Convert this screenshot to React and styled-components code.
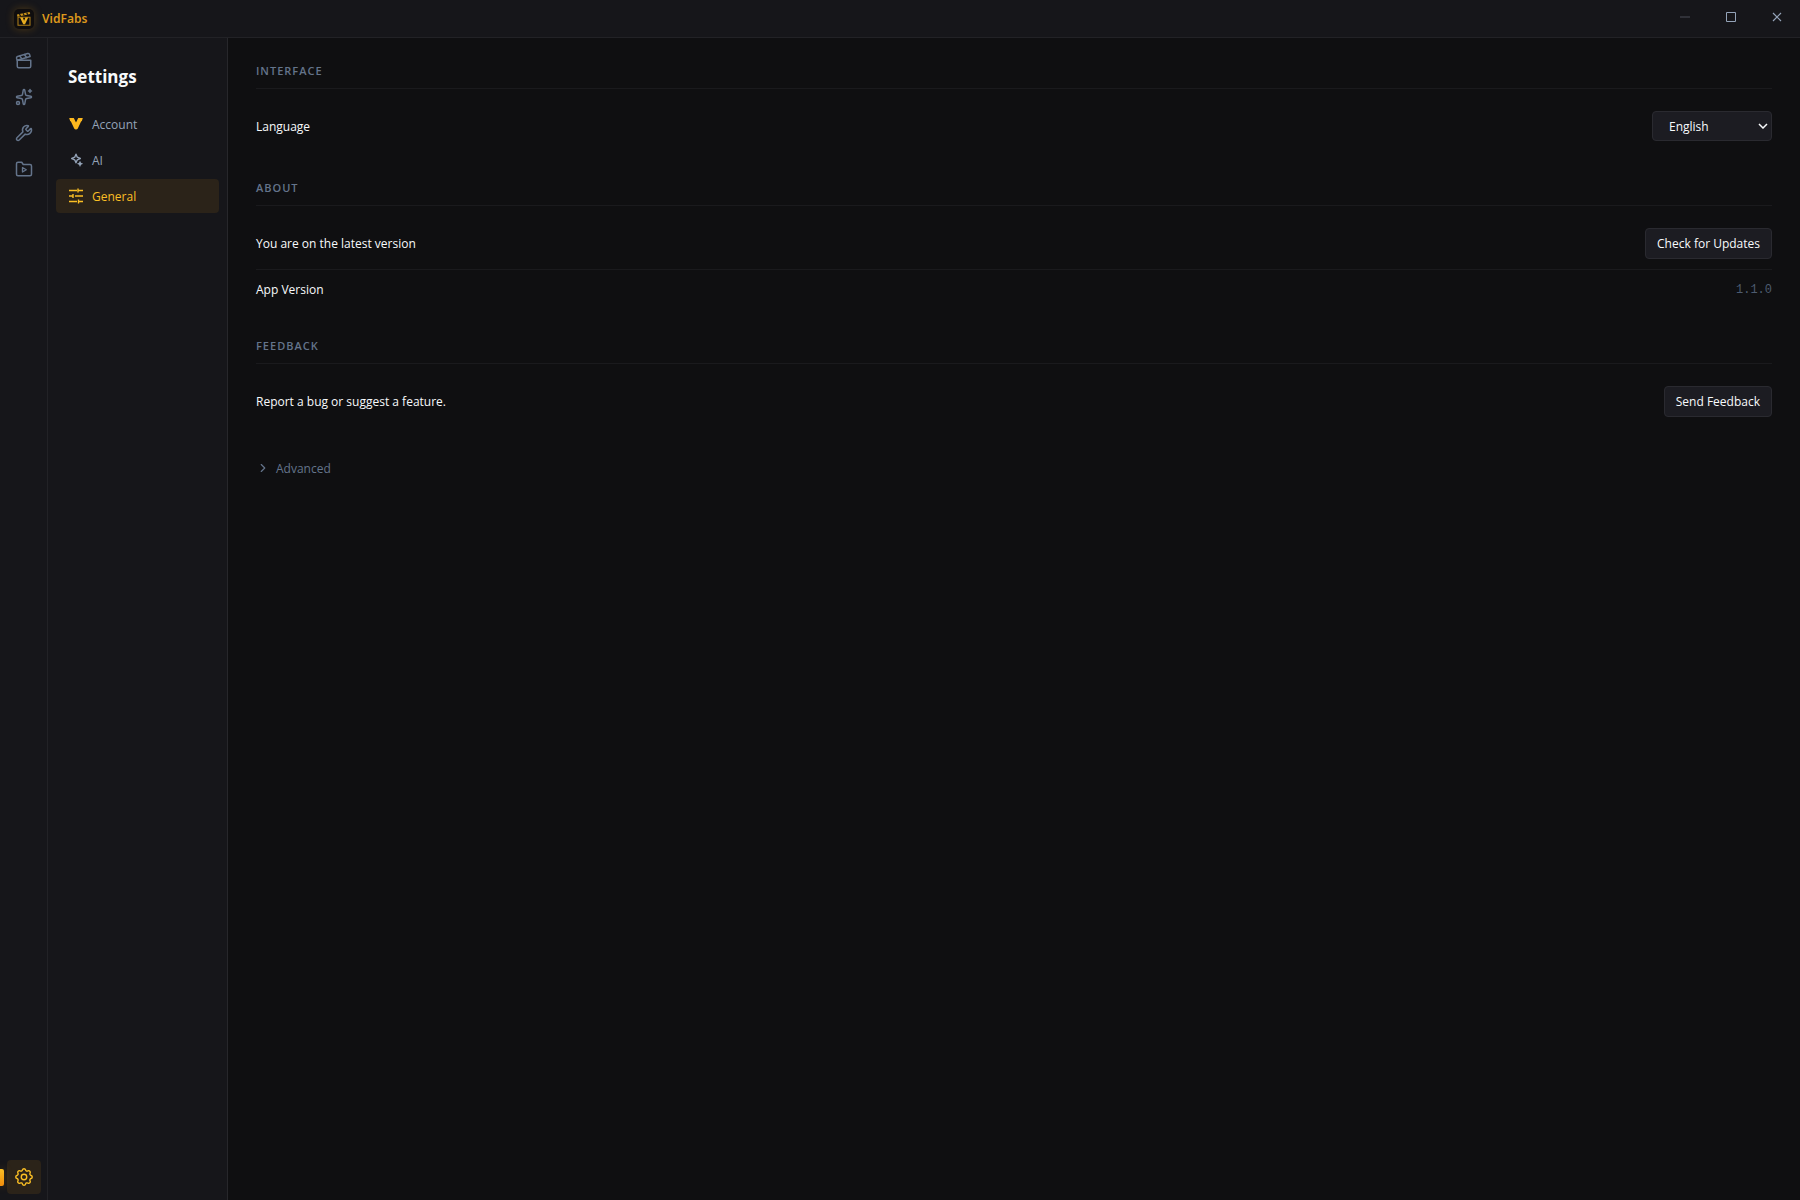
import React, { useState } from "react";
import styled, { createGlobalStyle } from "styled-components";
import { Clapperboard, Sparkles, Wrench, ChevronRight } from "lucide-react";

const Global = createGlobalStyle`
* {
  box-sizing: border-box;
}
body {
  margin: 0;
  background: #0f0f11;
  color: #f8fafc;
  font-family: "Open Sans", "Noto Sans", sans-serif;
  font-size: 12px;
}
button, select {
  font-family: inherit;
}
`

function Logo() {
  return (
    <svg width="20" height="20" viewBox="0 0 20 20" fill="none" aria-hidden="true">
      <path d="M4 8.3h12v8H4z" stroke="#a87b1a" strokeWidth="1.1" />
      <path d="M3.4 7.8 3 5.6 15.6 2.9l.6 2.2z" fill="#c9931a" />
      <path d="m5.4 5.1 1.2 2M9 4.3l1.2 2M12.6 3.6l1.2 2" stroke="#14120f" strokeWidth="1.1" />
      <path d="M6 8.5h2.8l1.3 3.2 1.3-3.2h2.8L11 15.3H9.2z" fill="#e8ad20" />
    </svg>
  );
}

function FolderPlayIcon() {
  return (
    <svg width="18" height="18" viewBox="0 0 24 24" fill="none" stroke="currentColor" strokeWidth="2" strokeLinecap="round" strokeLinejoin="round" aria-hidden="true">
      <path d="M22 19a2 2 0 0 1-2 2H4a2 2 0 0 1-2-2V5a2 2 0 0 1 2-2h5l2 3h9a2 2 0 0 1 2 2z" />
      <path d="M10 10v6l5-3z" strokeWidth="1.8" />
    </svg>
  );
}

function GearIcon() {
  return (
    <svg width="22" height="22" viewBox="0 0 24 24" fill="none" stroke="currentColor" strokeWidth="1.5" strokeLinecap="round" strokeLinejoin="round" aria-hidden="true">
      <path d="M10.325 4.317c.426-1.756 2.924-1.756 3.35 0a1.724 1.724 0 0 0 2.573 1.066c1.543-.94 3.31.826 2.37 2.37a1.724 1.724 0 0 0 1.065 2.572c1.756.426 1.756 2.924 0 3.35a1.724 1.724 0 0 0-1.066 2.573c.94 1.543-.826 3.31-2.37 2.37a1.724 1.724 0 0 0-2.572 1.065c-.426 1.756-2.924 1.756-3.35 0a1.724 1.724 0 0 0-2.573-1.066c-1.543.94-3.31-.826-2.37-2.37a1.724 1.724 0 0 0-1.065-2.572c-1.756-.426-1.756-2.924 0-3.35a1.724 1.724 0 0 0 1.066-2.573c-.94-1.543.826-3.31 2.37-2.37 1 .608 2.296.07 2.572-1.065z" />
      <circle cx="12" cy="12" r="3" />
    </svg>
  );
}

function AccountIcon() {
  return (
    <svg width="16" height="16" viewBox="0 0 16 16" aria-hidden="true">
      <path d="M1.2 2h4.6L8 6.6 10.2 2h4.6l-1 3.2h-.6l-3.4 7.2c-.7 1.5-2.9 1.5-3.6 0L2.8 5.2h-.6z" fill="#fdb81e" />
    </svg>
  );
}

function AiIcon() {
  return (
    <svg width="16" height="16" viewBox="0 0 16 16" aria-hidden="true">
      <path d="M8 2.2 9.3 5.200 12.300 6.500 9.300 7.800 8 10.800 6.700 7.800 3.700 6.500 6.700 5.200z" fill="none" stroke="currentColor" strokeWidth="1.4" strokeLinejoin="round" />
      <path d="m12 8.700 1 2.100 2.100 1-2.100 1-1 2.100-1-2.100-2.100-1 2.100-1z" fill="currentColor" />
    </svg>
  );
}

function TuneIcon() {
  return (
    <svg width="16" height="16" viewBox="0 0 16 16" fill="none" stroke="currentColor" strokeWidth="1.4" aria-hidden="true">
      <path d="M1 2.5h8M10 .5v4M10 2.5h5M1 8h4M5 6v4M7 8h8M1 13.5h8M10.5 11.5v4M10.5 13.5H15" />
    </svg>
  );
}

const tools = [
  { label: "Projects", icon: <Clapperboard size={18} /> },
  { label: "Generate", icon: <Sparkles size={18} /> },
  { label: "Tools", icon: <Wrench size={18} /> },
  { label: "Library", icon: <FolderPlayIcon /> },
];

const pages = [
  { label: "Account", icon: <AccountIcon /> },
  { label: "AI", icon: <AiIcon /> },
  { label: "General", icon: <TuneIcon /> },
];

function TitleBar() {
  return (
    <Bar>
      <LogoBox><Logo /></LogoBox>
      <Brand>VidFabs</Brand>
      <WindowButton aria-label="Minimize" disabled>
        <svg width="10" height="10"><path d="M0 5h10" stroke="#303138" strokeWidth="2" /></svg>
      </WindowButton>
      <WindowButton aria-label="Maximize">
        <svg width="10" height="10"><path d="M.5.5h9v9h-9z" fill="none" stroke="currentColor" /></svg>
      </WindowButton>
      <WindowButton aria-label="Close">
        <svg width="10" height="10"><path d="m1 1 8 8M9 1 1 9" stroke="currentColor" strokeWidth="1.2" /></svg>
      </WindowButton>
    </Bar>
  );
}

function App() {
  const [page, setPage] = useState("General");
  const [language, setLanguage] = useState("en");

  return (
    <Shell>
      <Global />
      <TitleBar />
      <Body>
        <Rail aria-label="Workspace">
          {tools.map((t) => (
            <RailButton key={t.label} aria-label={t.label}>{t.icon}</RailButton>
          ))}
          <Spacer />
          <RailButton $active aria-label="Settings"><GearIcon /></RailButton>
        </Rail>
        <Sidebar>
          <Title>Settings</Title>
          {pages.map((p) => (
            <NavButton key={p.label} $active={p.label === page} onClick={() => setPage(p.label)}>
              {p.icon}
              {p.label}
            </NavButton>
          ))}
        </Sidebar>
        <Main>
          <Section>
            <SectionTitle>Interface</SectionTitle>
            <Row>
              <label htmlFor="language">Language</label>
              <SelectWrap>
                <Select id="language" value={language} onChange={(e) => setLanguage(e.target.value)}>
                  <option value="en">English</option>
                </Select>
                <svg width="10" height="6" viewBox="0 0 10 6" aria-hidden="true">
                  <path d="m1 1 4 4 4-4" fill="none" stroke="#f8fafc" strokeWidth="1.5" />
                </svg>
              </SelectWrap>
            </Row>
          </Section>
          <Section>
            <SectionTitle>About</SectionTitle>
            <Row>
              <span>You are on the latest version</span>
              <Button>Check for Updates</Button>
            </Row>
            <Row $divided>
              <span>App Version</span>
              <Version>1.1.0</Version>
            </Row>
          </Section>
          <Section>
            <SectionTitle>Feedback</SectionTitle>
            <Row>
              <span>Report a bug or suggest a feature.</span>
              <Button>Send Feedback</Button>
            </Row>
          </Section>
          <Advanced aria-expanded="false">
            <ChevronRight size={14} />
            Advanced
          </Advanced>
        </Main>
      </Body>
    </Shell>
  );
}

export default App;

const Shell = styled.div`
min-height: 100vh;
display: flex;
flex-direction: column;
`
const Bar = styled.header`
height: 38px;
display: flex;
align-items: center;
background: #16161a;
border-bottom: 1px solid #222226;
padding-left: 14px;
`
const LogoBox = styled.span`
display: flex;
border-radius: 5px;
background: #0f0d0e;
box-shadow: 0 0 8px rgba(245, 158, 11, 0.25);
`
const Brand = styled.span`
flex: 1;
margin-left: 8px;
font-family: "Noto Sans", sans-serif;
font-size: 12px;
font-weight: 600;
color: #dc981c;
`
const WindowButton = styled.button`
width: 46px;
height: 32px;
display: flex;
align-items: center;
justify-content: center;
background: none;
border: 0;
padding: 0;
color: #94a3b8;
margin-bottom: 4px;
`
const Body = styled.div`
flex: 1;
display: flex;
`
const Rail = styled.nav`
width: 48px;
display: flex;
flex-direction: column;
align-items: center;
gap: 2px;
padding: 6px 0;
background: #16161a;
border-right: 1px solid #222226;
`
const RailButton = styled.button`
position: relative;
width: 34px;
height: 34px;
display: flex;
align-items: center;
justify-content: center;
padding: 0;
border: 0;
border-radius: 4px;
background: ${(p) => (p.$active ? "#2b2319" : "none")};
color: ${(p) => (p.$active ? "#fbbf24" : "#64748b")};
&::before {
  content: "";
  display: ${(p) => (p.$active ? "block" : "none")};
  position: absolute;
  left: -7px;
  top: 9px;
  width: 4px;
  height: 17px;
  border-radius: 0 2px 2px 0;
  background: linear-gradient(#fbbf24, #f08c0c);
  box-shadow: 0 0 8px rgba(245, 158, 11, 0.3);
}
`
const Spacer = styled.div`
flex: 1;
`
const Sidebar = styled.aside`
width: 180px;
display: flex;
flex-direction: column;
gap: 2px;
padding: 26px 8px;
background: #16161a;
border-right: 1px solid #27272b;
`
const Title = styled.h1`
margin: 0 12px 15px;
font-size: 17px;
line-height: 26px;
font-weight: 700;
`
const NavButton = styled.button`
height: 34px;
display: flex;
align-items: center;
gap: 8px;
padding: 0 12px;
border: 0;
border-radius: 4px;
font-size: 12px;
text-align: left;
background: ${(p) => (p.$active ? "#2b2319" : "none")};
color: ${(p) => (p.$active ? "#fbbf24" : "#94a3b8")};
`
const Main = styled.main`
flex: 1;
padding: 24px 28px;
`
const Section = styled.section`
margin-bottom: 28px;
`
const SectionTitle = styled.h2`
margin: 0 0 12px;
padding: 1px 0 9px;
border-bottom: 1px solid #1a1a1d;
font-size: 11px;
line-height: 16px;
font-weight: 600;
letter-spacing: 1px;
text-transform: uppercase;
color: #64748b;
`
const Row = styled.div`
display: flex;
align-items: center;
justify-content: space-between;
min-height: 40px;
padding: 10px 0;
border-top: ${(p) => (p.$divided ? "1px solid #1a1a1d" : "0")};
font-weight: 500;
`
const SelectWrap = styled.div`
display: grid;
align-items: center;
& > * {
  grid-area: 1 / 1;
}
svg {
  justify-self: end;
  margin-right: 4px;
  pointer-events: none;
}
`
const Select = styled.select`
appearance: none;
width: 120px;
height: 30px;
padding: 0 16px;
border: 1px solid #2a2a30;
border-radius: 4px;
background: #1c1c22;
color: #f8fafc;
font-size: 12px;
`
const Button = styled.button`
height: 31px;
padding: 0 11px;
border: 1px solid #2a2a30;
border-radius: 4px;
background: #1c1c22;
color: #f8fafc;
font-size: 12px;
`
const Version = styled.span`
font-family: "Liberation Mono", monospace;
font-size: 12px;
font-weight: 400;
color: #4d5b70;
`
const Advanced = styled.button`
display: flex;
align-items: center;
gap: 6px;
height: 26px;
padding: 0;
border: 0;
background: none;
color: #64748b;
font-size: 12px;
`
